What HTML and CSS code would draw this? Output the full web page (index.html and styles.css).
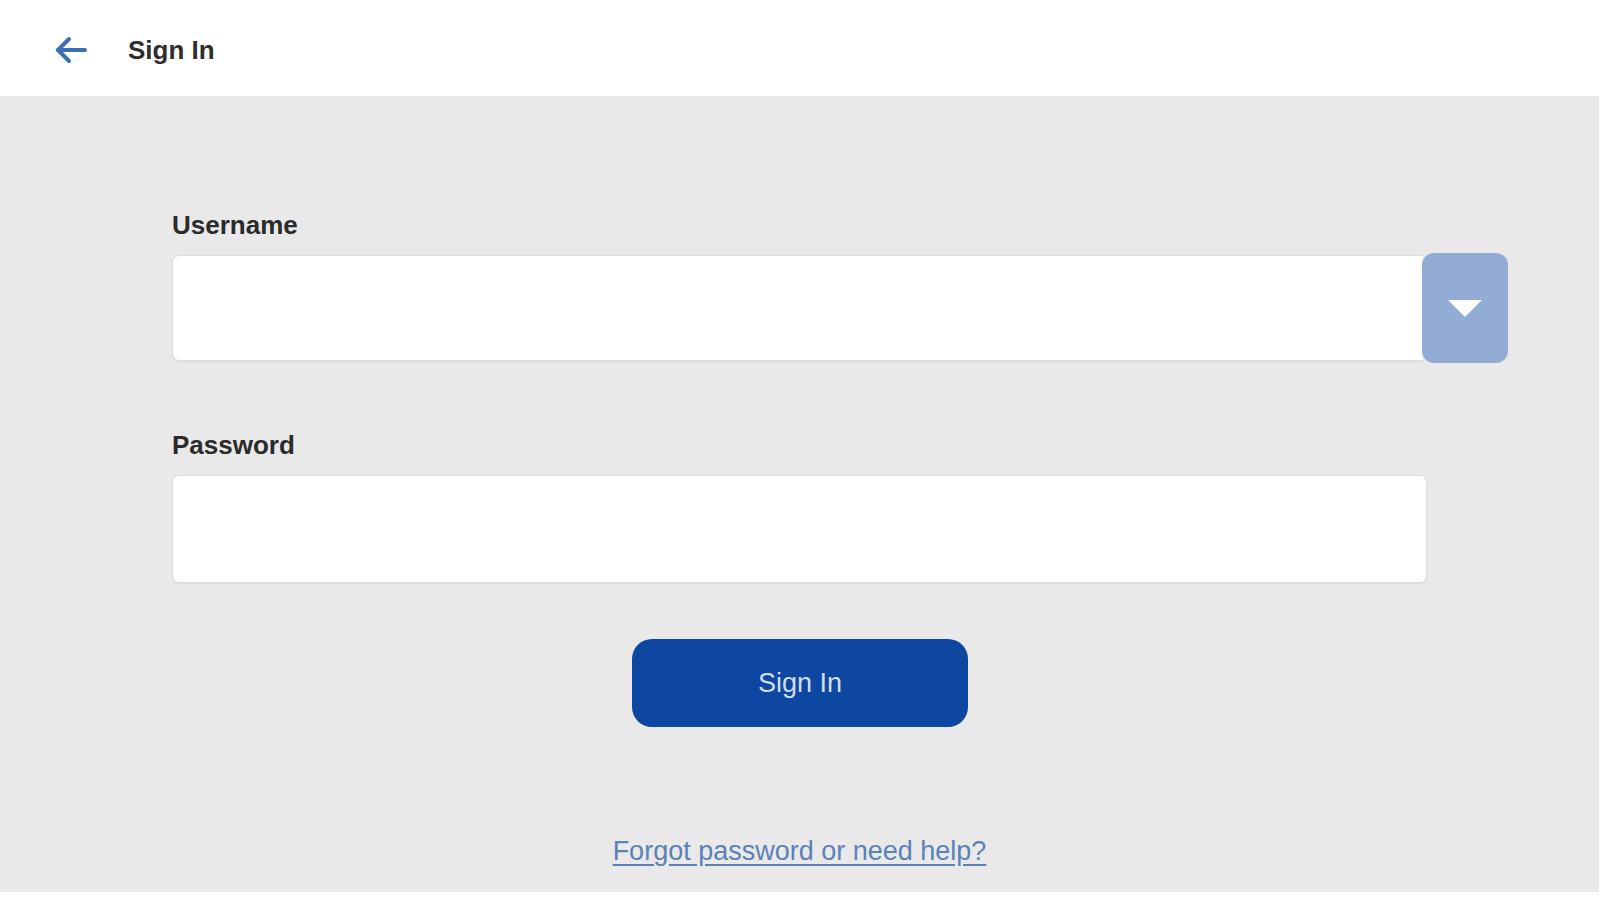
FILE: index.html
```html
<!DOCTYPE html>
<html lang="en">
<head>
<meta charset="utf-8">
<title>Sign In</title>
<link rel="stylesheet" href="styles.css">
</head>
<body>
<header class="topbar">
  <button class="back" aria-label="Back">
    <svg width="34" height="30" viewBox="0 0 34 30" fill="none" stroke="#3b6fb1" stroke-width="4" stroke-linecap="round" stroke-linejoin="round">
      <path d="M31 15H4"/>
      <path d="M15 4L4 15l11 11"/>
    </svg>
  </button>
  <h1 class="title">Sign In</h1>
</header>
<main class="content">
  <form class="form">
    <label class="label" for="user">Username</label>
    <div class="user-row">
      <input id="user" class="field field-user" type="text">
      <button type="button" class="drop" aria-label="Choose user">
        <svg width="34" height="17" viewBox="0 0 34 17"><path d="M0 0h34L17 17z" fill="#ffffff"/></svg>
      </button>
    </div>
    <label class="label label-pass" for="pass">Password</label>
    <input id="pass" class="field field-pass" type="password">
    <div class="actions">
      <button type="button" class="signin">Sign In</button>
    </div>
    <div class="help">
      <a href="#" class="help-link">Forgot password or need help?</a>
    </div>
  </form>
</main>
<div class="bottom"></div>
</body>
</html>
```
FILE: styles.css
```css
html, body {
  margin: 0;
  padding: 0;
  background: #ffffff;
  font-family: "Liberation Sans", Arial, sans-serif;
}

.topbar {
  height: 96px;
  display: flex;
  align-items: center;
  padding-left: 54px;
  box-sizing: border-box;
  background: #ffffff;
}

.back {
  border: 0;
  background: none;
  padding: 0;
  width: 34px;
  height: 30px;
  display: flex;
  margin-top: 4px;
}

.title {
  margin: 4px 0 0 40px;
  font-size: 26px;
  font-weight: 700;
  color: #2e2e2e;
  line-height: 32px;
}

.content {
  background: #e9e9e9;
  height: 796px;
  box-sizing: border-box;
  padding: 113px 0 0 172px;
}

.form {
  width: 1336px;
  display: flex;
  flex-direction: column;
}

.label {
  font-size: 26px;
  font-weight: 700;
  color: #2b2b2b;
  line-height: 32px;
  margin-bottom: 12px;
}

.label-pass {
  margin-top: 66px;
  margin-bottom: 14px;
}

.user-row {
  display: flex;
  align-items: center;
}

.field {
  width: 1255px;
  height: 106px;
  box-sizing: border-box;
  border: 1px solid #dcdcdc;
  border-radius: 7px;
  background: #ffffff;
  box-shadow: 0 1px 2px rgba(0,0,0,0.06);
  margin: 0;
  padding: 0 20px;
  font-size: 26px;
  outline: none;
}

.field-user {
  width: 1251px;
  border-top-right-radius: 0;
  border-bottom-right-radius: 0;
  border-right: 0;
}

.field-pass {
  height: 108px;
}

.drop {
  width: 86px;
  height: 110px;
  border: 0;
  border-radius: 12px;
  background: #93acd5;
  display: flex;
  align-items: center;
  justify-content: center;
  padding: 0;
  margin-left: -1px;
}

.actions {
  width: 1255px;
  display: flex;
  justify-content: center;
  margin-top: 56px;
}

.signin {
  width: 336px;
  height: 88px;
  border: 0;
  border-radius: 20px;
  background: #0d47a1;
  color: #d3ddef;
  font-family: "Liberation Sans", Arial, sans-serif;
  font-size: 27px;
  padding: 0;
  margin-left: 1px;
}

.help {
  width: 1255px;
  display: flex;
  justify-content: center;
  margin-top: 108px;
}

.help-link {
  font-size: 27px;
  line-height: 32px;
  color: #5a82b8;
  text-decoration: underline;
  text-underline-offset: 4px;
}

.bottom {
  height: 8px;
  background: #ffffff;
}
```
